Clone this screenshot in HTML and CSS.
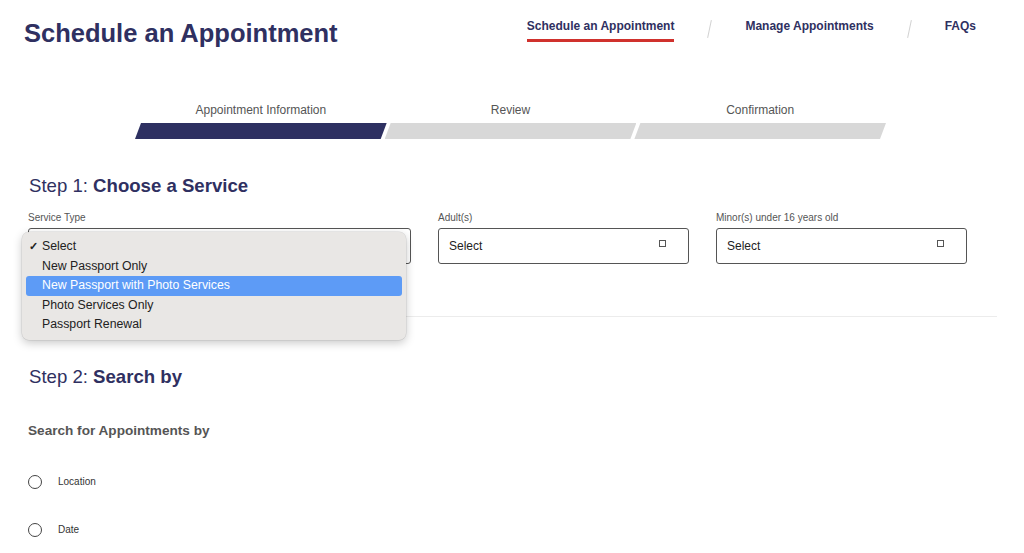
FILE: index.html
```html
<!DOCTYPE html>
<html lang="en">
<head>
<meta charset="utf-8">
<title>Schedule an Appointment</title>
<link rel="stylesheet" href="styles.css">
</head>
<body>
<header class="header">
  <h1 class="title">Schedule an Appointment</h1>
  <nav class="nav">
    <a class="nav-item active">Schedule an Appointment</a>
    <span class="nav-sep"></span>
    <a class="nav-item">Manage Appointments</a>
    <span class="nav-sep"></span>
    <a class="nav-item">FAQs</a>
  </nav>
</header>

<section class="progress">
  <div class="progress-step">
    <div class="progress-label">Appointment Information</div>
    <div class="progress-bar done"></div>
  </div>
  <div class="progress-step">
    <div class="progress-label">Review</div>
    <div class="progress-bar"></div>
  </div>
  <div class="progress-step">
    <div class="progress-label">Confirmation</div>
    <div class="progress-bar"></div>
  </div>
</section>

<main class="content">
  <h2 class="step-title">Step 1: <strong>Choose a Service</strong></h2>
  <div class="fields">
    <div class="field wide">
      <div class="field-label">Service Type</div>
      <div class="select-box">
        <span class="select-icon"></span>
        <ul class="dropdown">
          <li class="option"><span class="check">✓</span>Select</li>
          <li class="option">New Passport Only</li>
          <li class="option selected">New Passport with Photo Services</li>
          <li class="option">Photo Services Only</li>
          <li class="option">Passport Renewal</li>
        </ul>
      </div>
    </div>
    <div class="field">
      <div class="field-label">Adult(s)</div>
      <div class="select-box">
        <span class="select-text">Select</span>
        <span class="select-icon"></span>
      </div>
    </div>
    <div class="field">
      <div class="field-label">Minor(s) under 16 years old</div>
      <div class="select-box">
        <span class="select-text">Select</span>
        <span class="select-icon"></span>
      </div>
    </div>
  </div>

  <hr class="divider">

  <h2 class="step-title step2">Step 2: <strong>Search by</strong></h2>
  <h3 class="sub-title">Search for Appointments by</h3>
  <div class="radio-row first"><span class="radio"></span><span class="radio-label">Location</span></div>
  <div class="radio-row"><span class="radio"></span><span class="radio-label">Date</span></div>
</main>
</body>
</html>
```

FILE: styles.css
```css
* { box-sizing: border-box; }
html, body {
  margin: 0;
  padding: 0;
  background: #ffffff;
  font-family: "Liberation Sans", Arial, Helvetica, sans-serif;
  color: #333;
}
.header {
  display: flex;
  justify-content: space-between;
  align-items: flex-start;
  padding: 17px 48px 0 24px;
}
.title {
  margin: 0;
  font-size: 25.5px;
  line-height: 32px;
  font-weight: 700;
  color: #2f3061;
}
.nav {
  display: flex;
  align-items: flex-start;
  gap: 35px;
  margin-top: 1px;
}
.nav-item {
  font-size: 12px;
  line-height: 16px;
  font-weight: 700;
  color: #2f3061;
  padding-bottom: 5px;
  border-bottom: 3px solid transparent;
}
.nav-item.active { border-bottom-color: #d0312d; }
.nav-sep {
  width: 1px;
  height: 18px;
  margin-top: 2px;
  background: #d2d2d2;
  transform: rotate(12deg);
}
.progress {
  display: flex;
  margin: 54px 0 0 135px;
  width: 751px;
}
.progress-step {
  flex: 1;
  display: flex;
  flex-direction: column;
  align-items: stretch;
}
.progress-step + .progress-step { margin-left: -2px; }
.progress-label {
  font-size: 12px;
  line-height: 14px;
  color: #555;
  text-align: center;
  margin-bottom: 6px;
}
.progress-bar {
  height: 16px;
  background: #d8d8d8;
  clip-path: polygon(6px 0, 100% 0, calc(100% - 6px) 100%, 0 100%);
}
.progress-bar.done { background: #2e3061; }

.content { padding: 0 27px 0 28px; }
.step-title {
  margin: 36px 0 0 1px;
  font-size: 18.6px;
  line-height: 22px;
  font-weight: 400;
  color: #2f3061;
}
.step-title strong { font-weight: 700; }
.fields {
  display: flex;
  gap: 27px;
  margin-top: 15px;
}
.field { width: 251px; }
.field.wide { width: 383px; }
.field-label {
  font-size: 10px;
  line-height: 12px;
  color: #555;
  margin-bottom: 4px;
}
.select-box {
  position: relative;
  height: 36px;
  border: 1px solid #555;
  border-radius: 3px;
  display: flex;
  align-items: center;
  justify-content: space-between;
  padding: 0 22px 0 10px;
}
.select-text {
  font-size: 12px;
  color: #222;
}
.select-icon {
  width: 7px;
  height: 7px;
  border: 1px solid #555;
  align-self: flex-start;
  margin-top: 11px;
  margin-left: auto;
}
.dropdown {
  position: absolute;
  left: -7px;
  top: 3px;
  width: 384px;
  height: 108px;
  margin: 0;
  padding: 5px 4px 0;
  list-style: none;
  background: #e9e7e5;
  border-radius: 7px;
  box-shadow: 0 3px 10px rgba(0,0,0,0.22), 0 0 0 0.5px rgba(0,0,0,0.12);
  z-index: 5;
}
.option {
  height: 19.5px;
  line-height: 19.5px;
  padding-left: 16px;
  font-size: 12.3px;
  color: #222;
  border-radius: 3px;
}
.option.selected {
  background: #5d9bf6;
  color: #fff;
}
.check {
  display: inline-block;
  width: 13px;
  margin-left: -13px;
  font-size: 11px;
  font-weight: 700;
}
.divider {
  border: 0;
  border-top: 1px solid #ececec;
  margin: 52px 0 0 0;
  width: 969px;
}
.step2 { margin-top: 49px; }
.sub-title {
  margin: 35px 0 0 0;
  font-size: 13.6px;
  line-height: 16px;
  font-weight: 700;
  color: #555;
}
.radio-row {
  display: flex;
  align-items: center;
  gap: 16px;
  margin-top: 34px;
}
.radio-row.first { margin-top: 36px; }
.radio {
  width: 14px;
  height: 14px;
  border: 1px solid #444;
  border-radius: 50%;
}
.radio-label {
  font-size: 10px;
  line-height: 14px;
  color: #333;
}
```
